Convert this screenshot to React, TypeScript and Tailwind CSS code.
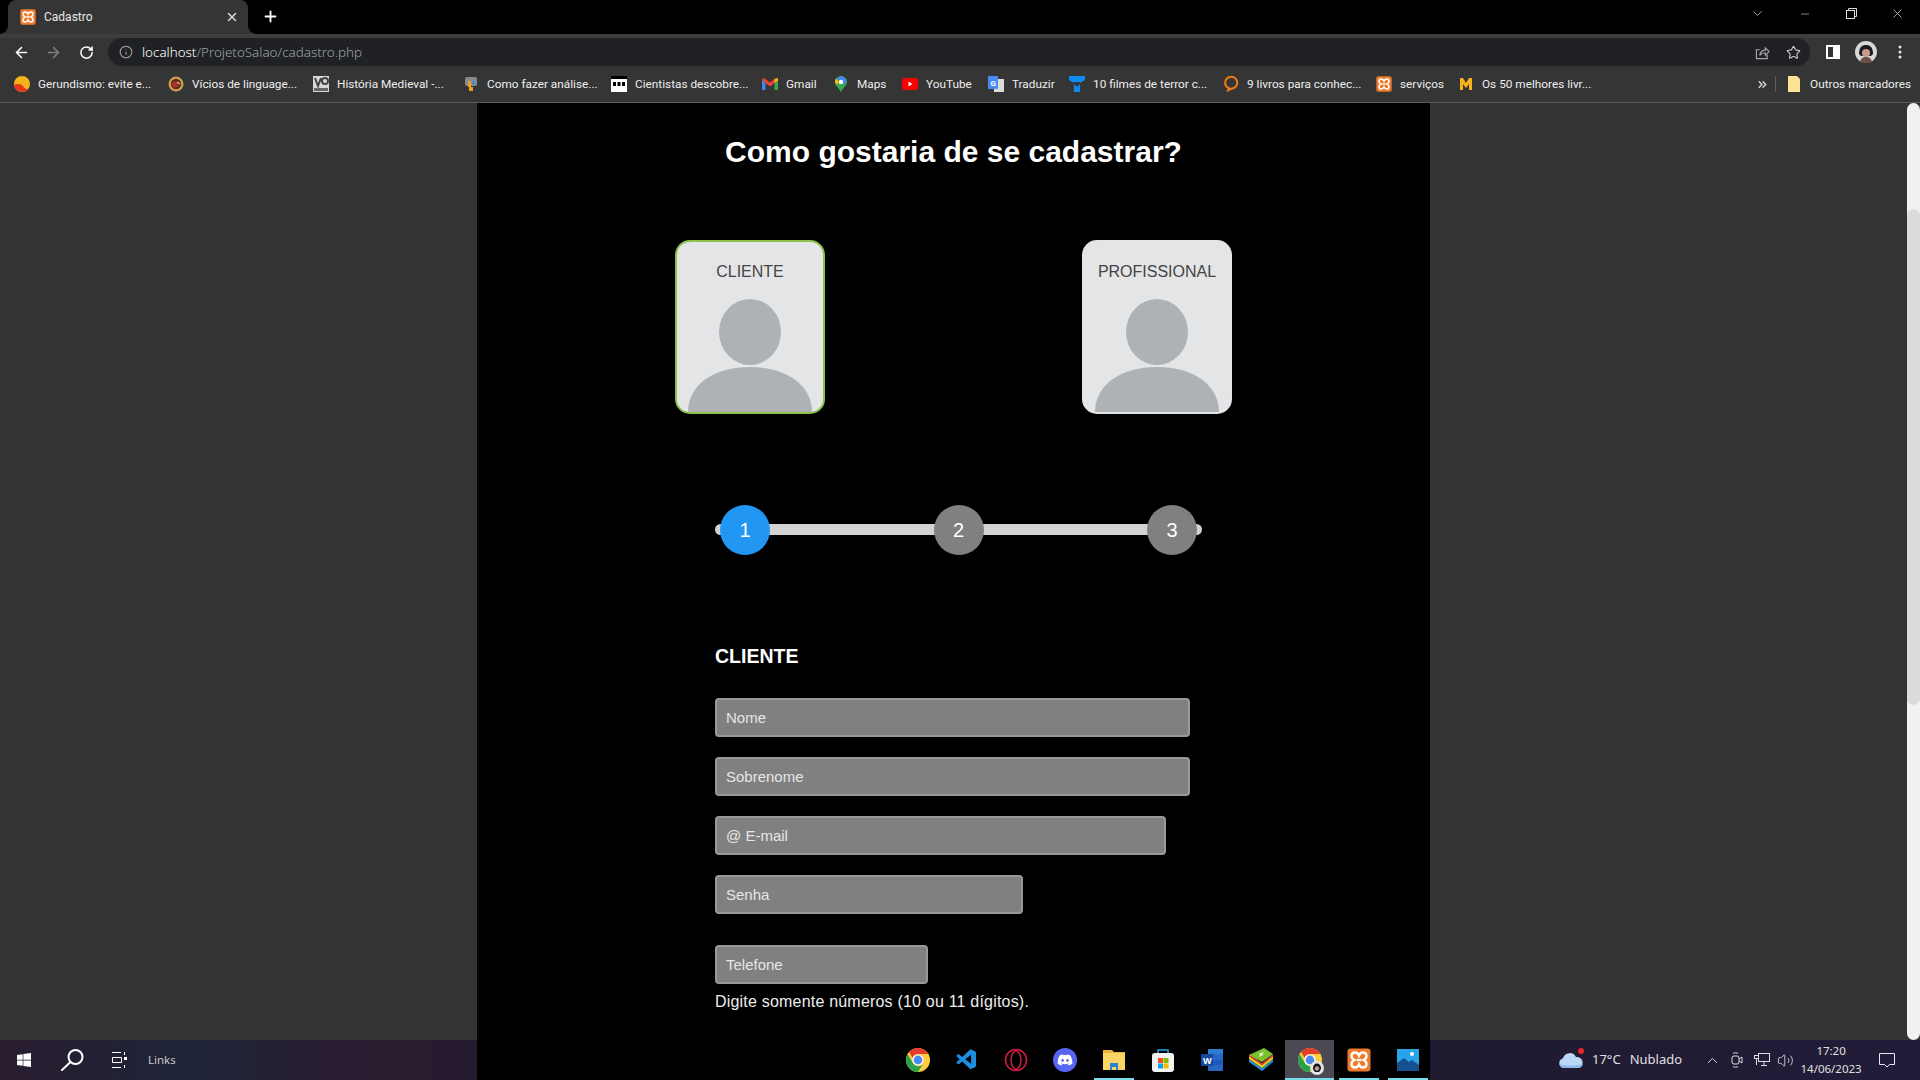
import React from "react";
import { ArrowLeft, ArrowRight, RotateCw, Info, Star, X, Plus, ChevronDown, Minus, ChevronUp, ChevronsRight, Volume2 } from "lucide-react";
import { FaWindows, FaDiscord } from "react-icons/fa";
import { VscVscode } from "react-icons/vsc";

function Xampp({ s = 16 }: { s?: number }) {
  return (
    <svg width={s} height={s} viewBox="0 0 24 24" className="shrink-0">
      <rect x="0.5" y="0.5" width="23" height="23" rx="3" fill="#ee7a2b" />
      <path d="M8 4.5c-2 0-3.5 1.5-3.5 3.5 0 1.7 1.2 3.2 3 4-1.800.8-3 2.300-3 4 0 2 1.500 3.500 3.500 3.500 1.700 0 3.200-1.200 4-3 .8 1.800 2.300 3 4 3 2 0 3.500-1.500 3.500-3.500 0-1.700-1.200-3.200-3-4 1.800-.8 3-2.300 3-4 0-2-1.500-3.500-3.500-3.500-1.700 0-3.200 1.200-4 3-.8-1.800-2.300-3-4-3z" fill="none" stroke="#fff" strokeWidth="2.4" />
      <rect x="10" y="10.800" width="4" height="2.400" fill="#fff" />
    </svg>
  );
}

function Chrome({ s = 24 }: { s?: number }) {
  return (
    <svg width={s} height={s} viewBox="0 0 24 24" className="shrink-0">
      <circle cx="12" cy="12" r="12" fill="#ffcd40" />
      <path d="M12 0a12 12 0 0 1 10.400 6H12a6 6 0 0 0-5.600 3.800L3 4a12 12 0 0 1 9-4z" fill="#e33b2e" />
      <path d="M1.600 6A12 12 0 0 0 12 24l4.800-7.800a6 6 0 0 1-9.800-1L1.600 6z" fill="#2aa24a" />
      <circle cx="12" cy="12" r="5.600" fill="#fff" />
      <circle cx="12" cy="12" r="4.400" fill="#4a8af4" />
    </svg>
  );
}

function Person() {
  return (
    <svg width="124" height="113" viewBox="0 0 124 113" className="block">
      <ellipse cx="62" cy="33" rx="31" ry="33" fill="#aeb2b5" />
      <path d="M0 113C0 85 27 68 62 68s62 17 62 45z" fill="#aeb2b5" />
    </svg>
  );
}

function Card({ label, selected }: { label: string; selected?: boolean }) {
  return (
    <div className={`flex h-[174px] w-[150px] flex-col items-center overflow-hidden rounded-[15px] bg-[#e4e5e7] ${selected ? "border-2 border-[#8bc34a] pt-[21px]" : "pt-[23px]"}`}>
      <span className="text-[16px] leading-[18px] text-[#444444]">{label}</span>
      <div className="mt-[18px]"><Person /></div>
    </div>
  );
}

function Step({ n, active }: { n: number; active?: boolean }) {
  return (
    <div className={`flex h-[50px] w-[50px] items-center justify-center rounded-full text-[20px] text-white ${active ? "bg-[#2196f3]" : "bg-[#808080]"}`}>{n}</div>
  );
}

function Field({ ph, w, mt }: { ph: string; w: string; mt: string }) {
  return (
    <input readOnly placeholder={ph} className={`block h-[39px] ${w} ${mt} rounded-[4px] border-2 border-[#999999] bg-[#808080] px-[9px] text-[15px] outline-none placeholder:text-[#e6e6e6]`} />
  );
}

const Bookmark = ({ icon, text, w }: { icon: React.ReactNode; text: string; w: string }) => (
  <div className="flex items-center">
    <span className="flex h-4 w-4 shrink-0 items-center justify-center">{icon}</span>
    <span className={`ml-2 ${w} whitespace-nowrap text-[11.800px] leading-4 text-[#eeeeee]`}>{text}</span>
  </div>
);

function Tile({ children, active, line }: { children: React.ReactNode; active?: boolean; line?: string }) {
  return (
    <div className={`relative flex h-10 w-[49px] shrink-0 items-center justify-center ${active ? "bg-[#4b4a52]" : ""}`}>
      {children}
      {line ? <span className={`absolute bottom-0 h-[2px] bg-[#7adcea] ${line}`} /> : null}
    </div>
  );
}

export default function App() {
  return (
    <div className="flex h-screen w-full flex-col overflow-hidden bg-[#333333] font-['Liberation_Sans',Arial,sans-serif]">
      {/* tab strip */}
      <div className="flex h-[34px] shrink-0 items-end bg-black font-['Roboto',sans-serif] text-white">
        <div className="relative ml-2 flex h-[34px] w-[240px] items-center rounded-t-[8px] bg-[#353535] pl-3 pr-2">
          <span className="absolute -left-2 bottom-0 h-2 w-2 bg-[radial-gradient(circle_at_0_0,transparent_7.5px,#353535_8px)]" />
          <span className="absolute -right-2 bottom-0 h-2 w-2 bg-[radial-gradient(circle_at_100%_0,transparent_7.5px,#353535_8px)]" />
          <Xampp />
          <span className="ml-2 text-[12px] text-[#e8e8e8]">Cadastro</span>
          <X size={14} strokeWidth={2.4} className="ml-auto mr-[1px] text-[#dddddd]" />
        </div>
        <Plus size={17} strokeWidth={2.6} className="mb-[9px] ml-[14px]" />
        <div className="ml-auto mb-[13px] flex items-center pr-[15px] text-[#dddddd]">
          <ChevronDown size={15} strokeWidth={1.2} />
          <Minus size={12} strokeWidth={1.2} className="ml-[34px]" />
          <svg width="11" height="11" viewBox="0 0 11 11" fill="none" stroke="currentColor" className="ml-[35px]"><rect x="0.500" y="2.500" width="8" height="8" /><path d="M2.500 2.500v-2h8v8h-2" /></svg>
          <X size={15} strokeWidth={1.2} className="ml-[33px]" />
        </div>
      </div>
      {/* toolbar */}
      <div className="flex h-[32px] shrink-0 items-center border-t-[4px] border-[#3e3e3e] bg-[#353535] font-['Noto_Sans',sans-serif] text-[#dddddd]">
        <ArrowLeft size={17} strokeWidth={2.2} className="ml-[13px] text-white" />
        <ArrowRight size={17} strokeWidth={2.2} className="ml-[15px] text-[#808080]" />
        <RotateCw size={15} strokeWidth={2.4} className="ml-[17px] text-white" />
        <div className="ml-[14px] flex h-[28px] w-[1702px] items-center rounded-full bg-[#202124] pl-[11px] pr-[8px]">
          <Info size={14} strokeWidth={1.8} className="text-[#a8a8a8]" />
          <span className="ml-[9px] text-[13.400px] font-light text-[#9aa0a6]"><span className="text-white">localhost</span>/ProjetoSalao/cadastro.php</span>
          <svg width="15" height="15" viewBox="0 0 16 16" fill="none" stroke="#a8a8a8" strokeWidth="1.200" className="ml-auto"><path d="M13 10v4.500H1.500V5H5" /><path d="M5 11c.5-3.500 3-5.500 6-5.500V3l4 4-4 4V8.300C8.500 8.300 6.500 9 5 11z" /></svg>
          <Star size={15} strokeWidth={1.8} className="ml-[16px] mr-[1px] text-[#c8c8c8]" />
        </div>
        <svg width="14" height="14" viewBox="0 0 14 14" className="ml-[16px]"><path fillRule="evenodd" d="M0 0h14v14H0zM2 2v10h5V2z" fill="#ffffff" /></svg>
        <svg width="22" height="22" viewBox="0 0 22 22" className="ml-[15px]"><circle cx="11" cy="11" r="11" fill="#d9d9d9" /><path d="M4 13c0-7 3-9 7-9s7 2 7 9l-2 2H6z" fill="#1d1d20" /><circle cx="11" cy="12" r="4" fill="#c79a8b" /><path d="M5 21c1-4 3-5 6-5s5 1 6 5a11 11 0 0 1-12 0z" fill="#6d4e4a" /></svg>
        <svg width="4" height="14" viewBox="0 0 4 14" className="ml-[21px]" fill="#e8e8e8"><circle cx="2" cy="2" r="1.500" /><circle cx="2" cy="7" r="1.500" /><circle cx="2" cy="12" r="1.500" /></svg>
      </div>
      {/* bookmarks */}
      <div className="flex h-[37px] shrink-0 items-center gap-4 border-b border-[#5c5c5c] bg-[#353535] pl-[14px] pr-[9px] font-['Roboto',sans-serif]">
        <Bookmark w="w-[114px]" text="Gerundismo: evite e..." icon={<svg width="16" height="16" viewBox="0 0 16 16"><circle cx="8" cy="8" r="8" fill="#f5b21c" /><path d="M0 9a8 8 0 0 0 14 4c-2 .5-4-1-5-3S4 7 0 9z" fill="#e8361e" /></svg>} />
        <Bookmark w="w-[105px]" text="Vícios de linguage..." icon={<svg width="16" height="16" viewBox="0 0 16 16"><circle cx="8" cy="8" r="7.500" fill="#c9a24a" /><circle cx="8" cy="8" r="5.200" fill="#5d2a1e" /><ellipse cx="7" cy="8.500" rx="3.500" ry="3" fill="#a8352a" /><path d="M9 6l3 2" stroke="#e8c878" strokeWidth="1.200" /></svg>} />
        <Bookmark w="w-[110px]" text="História Medieval -..." icon={<svg width="16" height="16" viewBox="0 0 16 16"><rect width="16" height="16" fill="#d8d8d8" /><path d="M2 2l3 8 3-8M9 5a3 3 0 1 0 6 0 3 3 0 1 0-6 0" fill="none" stroke="#444" strokeWidth="2" /><rect x="1" y="12" width="14" height="3" fill="#666" /></svg>} />
        <Bookmark w="w-[108px]" text="Como fazer análise..." icon={<svg width="16" height="16" viewBox="0 0 16 16"><rect x="2" y="1" width="12" height="9" rx="2" fill="#8a8a8a" /><path d="M5 5h3v6H5z" fill="#f0a020" /><path d="M9 5h3v3H9z" fill="#3a8ad8" /><path d="M6 11h4v4H6z" fill="#f0a020" /></svg>} />
        <Bookmark w="w-[111px]" text="Cientistas descobre..." icon={<svg width="16" height="16" viewBox="0 0 16 16"><rect width="16" height="16" fill="#fff" /><rect x="2" y="6" width="3" height="4" fill="#000" /><rect x="6.500" y="6" width="3" height="4" fill="#000" /><rect x="11" y="6" width="3" height="4" fill="#000" /><rect width="16" height="3" fill="#000" y="0" /></svg>} />
        <Bookmark w="w-[31px]" text="Gmail" icon={<svg width="16" height="12" viewBox="0 0 16 12"><path d="M0 2v9a1 1 0 0 0 1 1h2.500V5z" fill="#4285f4" /><path d="M16 2v9a1 1 0 0 1-1 1h-2.500V5z" fill="#34a853" /><path d="M0 2.500L3.500 5 8 8.500 12.500 5 16 2.500C16 .5 14.500-.3 13 .7L8 4.500 3 .7C1.500-.3 0 .5 0 2.500z" fill="#ea4335" /><path d="M12.500 1.200L16 0v2.500L12.500 5z" fill="#fbbc04" /></svg>} />
        <Bookmark w="w-[29px]" text="Maps" icon={<svg width="12" height="16" viewBox="0 0 12 16"><path d="M6 0a6 6 0 0 1 6 6c0 3-3 5-6 10C3 11 0 9 0 6a6 6 0 0 1 6-6z" fill="#34a853" /><path d="M1 2.500L6 0l6 4-3 4z" fill="#4285f4" /><path d="M0 6a6 6 0 0 1 1-3.500L4 6 1.500 9z" fill="#fbbc04" /><circle cx="6" cy="6" r="2.200" fill="#fff" /></svg>} />
        <Bookmark w="w-[46px]" text="YouTube" icon={<svg width="16" height="12" viewBox="0 0 16 12"><rect width="16" height="12" rx="3" fill="#f00" /><path d="M6.500 3.500v5l4-2.500z" fill="#fff" /></svg>} />
        <Bookmark w="w-[41px]" text="Traduzir" icon={<svg width="16" height="16" viewBox="0 0 16 16"><rect x="6" y="3" width="10" height="13" fill="#dcdcdc" /><rect width="10" height="13" rx="1" fill="#4a8af4" /><text x="2.500" y="9.500" fontSize="8" fontWeight="bold" fill="#fff">G</text></svg>} />
        <Bookmark w="w-[114px]" text="10 filmes de terror c..." icon={<svg width="16" height="16" viewBox="0 0 16 16"><path d="M0 0h16v4l-5 3v-1H5v1L0 4z" fill="#0f8af5" /><path d="M5 8l3 3 3-3v8H5z" fill="#0f8af5" /></svg>} />
        <Bookmark w="w-[113px]" text="9 livros para conhec..." icon={<svg width="16" height="16" viewBox="0 0 16 16" fill="none"><path d="M5 14.500l1-2.200a6 6 0 1 1 2 .4 6 6 0 0 1-3 1.800z" stroke="#f07a13" strokeWidth="2" /></svg>} />
        <Bookmark w="w-[42px]" text="serviços" icon={<Xampp />} />
        <Bookmark w="w-[108px]" text="Os 50 melhores livr..." icon={<svg width="12" height="12" viewBox="0 0 12 12"><path d="M0 0h3l3 5 3-5h3v12H9V6L6 10 3 6v6H0z" fill="#f5b21c" /></svg>} />
        <ChevronsRight size={13} strokeWidth={2.6} className="ml-auto text-[#dddddd]" />
        <span className="-ml-[10px] h-4 w-px bg-[#5f5f5f]" />
        <div className="-ml-[4px] flex items-center">
          <svg width="12" height="16" viewBox="0 0 12 16"><path d="M0 0h9l3 3v13H0z" fill="#fde293" /></svg>
          <span className="ml-[10px] whitespace-nowrap text-[11.800px] leading-4 text-[#eeeeee]">Outros marcadores</span>
        </div>
      </div>
      {/* page */}
      <div className="relative flex min-h-0 flex-1">
        <div className="ml-[477px] h-[1100px] w-[953px] shrink-0 bg-black">
          <h1 className="pt-[34px] text-center text-[30px] font-bold leading-[30px] text-white">Como gostaria de se cadastrar?</h1>
          <div className="ml-[198px] mt-[73px] flex w-[557px] justify-between">
            <Card label="CLIENTE" selected />
            <Card label="PROFISSIONAL" />
          </div>
          <div className="relative ml-[238px] mt-[91px] flex h-[50px] w-[487px] items-center">
            <div className="absolute inset-x-0 top-[19px] h-[11px] rounded-full bg-[#d3d3d3]" />
            <div className="relative ml-[5px] flex w-[477px] justify-between">
              <Step n={1} active />
              <Step n={2} />
              <Step n={3} />
            </div>
          </div>
          <div className="ml-[238px] mt-[89px]">
            <h2 className="text-[19.500px] font-bold leading-[24px] text-white">CLIENTE</h2>
            <Field ph="Nome" w="w-[475px]" mt="mt-[30px]" />
            <Field ph="Sobrenome" w="w-[475px]" mt="mt-[20px]" />
            <Field ph="@ E-mail" w="w-[451px]" mt="mt-[20px]" />
            <Field ph="Senha" w="w-[308px]" mt="mt-[20px]" />
            <Field ph="Telefone" w="w-[213px]" mt="mt-[31px]" />
            <p className="mt-[8px] text-[16px] leading-[20px] tracking-[0.2px] text-[#eeeeee]">Digite somente números (10 ou 11 dígitos).</p>
          </div>
        </div>
        <div className="absolute bottom-0 right-0 top-0 w-[13px] overflow-hidden rounded-[7px] bg-[#f1f1f1]">
          <div className="mt-[106px] h-[496px] rounded-[7px] bg-[#dcdcdc]" />
        </div>
      </div>
      {/* taskbar */}
      <div className="flex h-10 shrink-0 items-center bg-[linear-gradient(90deg,#281c2e_0%,#1e2439_10%,#291c30_18%,#1c1a2a_55%,#1f1a2e_70%,#221c3a_100%)] font-['Noto_Sans',sans-serif] text-[#dddddd]">
        <div className="flex h-10 w-[893px] shrink-0 items-center pl-4 text-white">
          <FaWindows size={16} />
          <svg width="23" height="22" viewBox="0 0 23 22" fill="none" stroke="#fff" strokeWidth="2" className="ml-[29px]"><circle cx="14.500" cy="8" r="7" /><path d="M9.500 13L1 21" strokeLinecap="round" /></svg>
          <svg width="16" height="16" viewBox="0 0 16 16" fill="none" stroke="#fff" className="ml-[28px]"><path d="M0 .5h9M0 15.500h9M.5 5.500h9v5h-9zM12.500 0v3M12.500 13v3" /><rect x="12" y="5" width="3" height="3" fill="#fff" stroke="none" /></svg>
          <span className="ml-5 text-[11.500px] text-[#c8c8c8]">Links</span>
        </div>
        <div className="flex shrink-0 items-center">
          <Tile><Chrome /></Tile>
          <Tile><VscVscode size={24} className="text-[#1b8fe0]" /></Tile>
          <Tile><svg width="24" height="24" viewBox="0 0 24 24" fill="none" stroke="#d21d45" strokeWidth="1.500"><circle cx="12" cy="12" r="10.500" /><ellipse cx="12" cy="12" rx="5" ry="9" /></svg></Tile>
          <Tile><span className="flex h-6 w-6 items-center justify-center rounded-full bg-[#5865f2]"><FaDiscord size={16} className="text-white" /></span></Tile>
          <Tile line="w-[40px]"><svg width="22" height="20" viewBox="0 0 22 20"><path d="M0 0h9l2 2h11v18H0z" fill="#e8b53a" /><rect y="3" width="22" height="17" fill="#fad565" /><path d="M7 13h8v7h-2v-3H9v3H7z" fill="#2a83d4" /></svg></Tile>
          <Tile><svg width="24" height="24" viewBox="0 0 24 24"><path d="M7 7V2h10v5" fill="none" stroke="#27a6e8" strokeWidth="1.500" /><rect x="1" y="5" width="22" height="19" rx="3" fill="#f3f3f3" /><rect x="7" y="10" width="5" height="5" fill="#f25022" /><rect x="12.500" y="10" width="5" height="5" fill="#7fba00" /><rect x="7" y="15.500" width="5" height="5" fill="#00a4ef" /><rect x="12.500" y="15.500" width="5" height="5" fill="#ffb900" /></svg></Tile>
          <Tile><svg width="24" height="24" viewBox="0 0 24 24"><rect x="8" y="1" width="15" height="22" rx="1" fill="#2b67c2" /><rect x="8" y="1" width="15" height="5" fill="#2b7cd3" /><rect x="8" y="12" width="15" height="5" fill="#185abd" /><rect x="1" y="6" width="12" height="12" rx="1" fill="#124a9e" /><text x="3" y="15.500" fontSize="9" fontWeight="bold" fill="#fff">W</text></svg></Tile>
          <Tile><svg width="24" height="24" viewBox="0 0 24 24"><path d="M0 14L13 23l11-9v-3L13 20 0 11z" fill="#1e8fd0" /><path d="M0 11L13 20l11-9V8l-11 9L0 8z" fill="#f0c821" /><path d="M0 8l13 9 11-9V6L13 15 0 6z" fill="#e33b2e" /><path d="M0 7L15 0l9 6-11 8z" fill="#7ac230" /><path d="M9 6l6-2-2 3 3-1-6 3 1-3z" fill="#e9f7d0" /></svg></Tile>
          <Tile active line="w-[49px]"><div className="relative"><Chrome /><svg width="14" height="14" viewBox="0 0 14 14" className="absolute -bottom-[3px] -right-[2px]"><circle cx="7" cy="7" r="7" fill="#e4e4e4" /><path d="M3 8c0-4 2-5.500 4-5.500s4 1.500 4 5.500l-2 3H5z" fill="#17171a" /><circle cx="7" cy="7.500" r="2.200" fill="#c79a8b" /></svg></div></Tile>
          <Tile line="w-[40px]"><Xampp s={24} /></Tile>
          <Tile line="w-[40px]"><svg width="22" height="22" viewBox="0 0 22 22"><rect width="22" height="22" fill="#2aa4e8" /><path d="M0 22V14l7-5 5 4 3-2 7 5v6z" fill="#17508f" /><circle cx="15" cy="5" r="2" fill="#fff" /></svg></Tile>
        </div>
        <div className="flex h-10 min-w-0 flex-1 items-center text-[#e0e0e0]">
          <div className="relative ml-[127px]">
            <svg width="24" height="16" viewBox="0 0 24 16"><path d="M5 16a5 5 0 0 1-1-9.800A7 7 0 0 1 17 5a5.500 5.500 0 0 1 2 11z" fill="#bcd6f5" /><path d="M0 12c6 2 18 2 24 0-1 3-3 4-5 4H5c-3 0-4-2-5-4z" fill="#8fb8ea" /></svg>
            <span className="absolute -right-[1px] -top-[4px] h-[6px] w-[6px] rounded-full bg-[#e02a2a]" />
          </div>
          <span className="ml-[9px] text-[13px]">17°C</span>
          <span className="ml-[9px] text-[13px]">Nublado</span>
          <ChevronUp size={17} strokeWidth={1.4} className="ml-[22px]" />
          <svg width="12" height="16" viewBox="0 0 12 16" fill="none" stroke="#ddd" className="ml-[10px]"><rect x="1" y="4" width="7" height="8" rx="2" /><path d="M8 7l3-2v6l-3-2M2 1.500c1.500-1 3.500-1 5 0M2 14.500c1.500 1 3.500 1 5 0" /></svg>
          <svg width="16" height="14" viewBox="0 0 16 14" fill="none" stroke="#ddd" className="ml-[11px]"><rect x="4.500" y=".5" width="11" height="8" /><path d="M10 9v3M7 12.500h6" /><rect x=".5" y="2.500" width="4" height="3" fill="#201a2c" /><path d="M2.500 5.500V12" /></svg>
          <Volume2 size={17} strokeWidth={1.2} className="ml-[7px]" />
          <div className="ml-[6px] flex w-[62px] flex-col items-center text-[11.500px] leading-[18px]">
            <span>17:20</span>
            <span>14/06/2023</span>
          </div>
          <svg width="16" height="16" viewBox="0 0 16 16" fill="none" stroke="#e8e8e8" className="ml-[17px]"><path d="M.5 1.500h15v11h-5L8 15l-2.500-2.500h-5z" /></svg>
        </div>
      </div>
    </div>
  );
}
